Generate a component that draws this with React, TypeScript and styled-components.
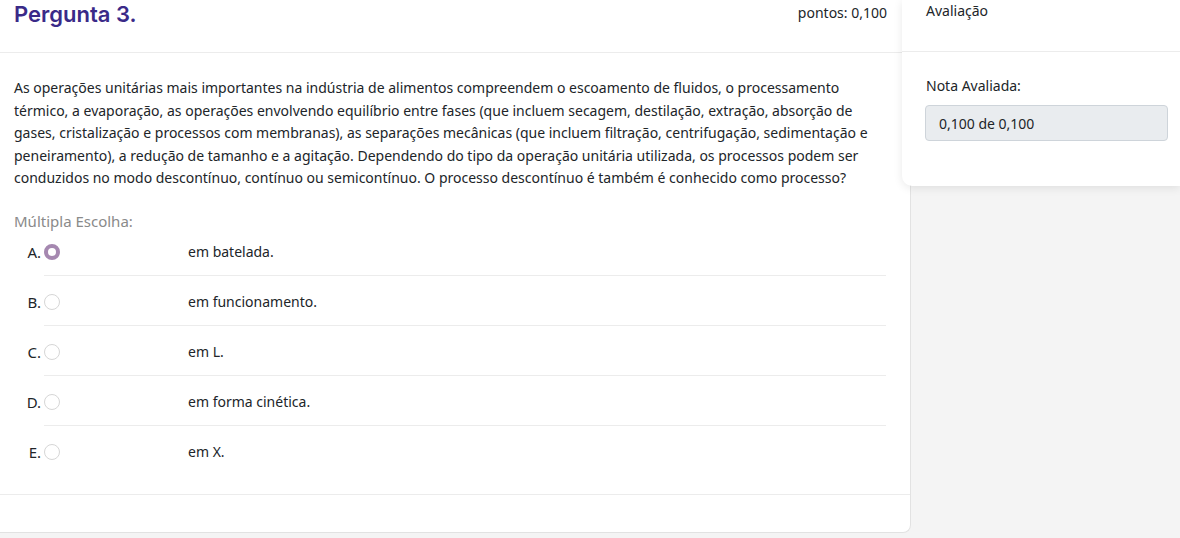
import styled, { createGlobalStyle } from 'styled-components';

const GlobalStyle = createGlobalStyle`
  html, body {
    margin: 0;
    padding: 0;
    background: #f4f4f4;
    font-family: "Segoe UI", "Noto Sans", "Liberation Sans", sans-serif;
    color: #212529;
  }
`

const Page = styled.div`
  display: flex;
  align-items: flex-start;
  height: 538px;
  overflow: hidden;
`

const QuestionCard = styled.section`
  width: 911px;
  flex-shrink: 0;
  background: #fff;
  border-right: 1px solid #e2e2e2;
  border-bottom: 1px solid #e2e2e2;
  border-bottom-right-radius: 8px;
  box-sizing: border-box;
`

const CardHeader = styled.header`
  height: 52px;
  display: flex;
  justify-content: space-between;
  align-items: flex-start;
  padding: 0 23px 0 14px;
  border-bottom: 1px solid #ececec;
`

const Title = styled.h2`
  margin: -1px 0 0;
  font-family: Inter, "Liberation Sans", sans-serif;
  font-size: 22px;
  font-weight: 600;
  line-height: 30px;
  color: #3a2a88;
`

const Points = styled.span`
  font-size: 14px;
  line-height: 26px;
`

const CardBody = styled.div`
  padding: 24px 24px 0 14px;
`

const Statement = styled.p`
  margin: 0;
  font-size: 14px;
  line-height: 22.6px;
`

const ChoiceLabel = styled.div`
  margin-top: 23px;
  color: #8a8a8a;
  font-size: 15px;
  line-height: 16px;
`

const OptionList = styled.ul`
  list-style: none;
  margin: 0;
  padding: 0 24px 0 44px;
`

const OptionRow = styled.li<{ $last?: boolean }>`
  display: flex;
  align-items: center;
  padding: ${p => (p.$last ? '15px 0 31px' : '15px 0 12px')};
  line-height: 22px;
  font-size: 14px;
  border-bottom: ${p => (p.$last ? 'none' : '1px solid #ececec')};

  &:first-child {
    padding-top: 12px;
  }
`

const Letter = styled.span`
  width: 15px;
  margin-left: -18px;
  margin-right: 3px;
  font-size: 15px;
  text-align: right;
  white-space: nowrap;
`

const Radio = styled.span<{ $checked?: boolean }>`
  width: 16px;
  height: 16px;
  border-radius: 50%;
  box-sizing: border-box;
  flex-shrink: 0;
  border: ${p => (p.$checked ? '4.5px solid #a588b0' : '1px solid #d6d6d6')};
  background: #fff;
`

const AnswerText = styled.span`
  margin-left: 128px;
`

const CardFooter = styled.div`
  height: 37px;
  border-top: 1px solid #ececec;
`

const SidePanel = styled.aside`
  position: relative;
  z-index: 2;
  flex: 1;
  margin-left: -9px;
  background: #fff;
  border-bottom-left-radius: 10px;
  box-shadow: 0 2px 10px rgba(0, 0, 0, 0.09);
`

const PanelHeader = styled.div`
  height: 51px;
  padding: 0 24px;
  border-bottom: 1px solid #ececec;
  font-size: 14px;
  line-height: 22px;
`

const PanelBody = styled.div`
  padding: 23px 12px 45px 23px;
`

const FieldLabel = styled.div`
  font-size: 14px;
  line-height: 22px;
  margin-left: 1px;
  margin-bottom: 8px;
`

const ReadonlyField = styled.div`
  height: 36px;
  box-sizing: border-box;
  padding: 0 13px;
  display: flex;
  align-items: center;
  font-size: 14px;
  background: #e9ecef;
  border: 1px solid #ced4da;
  border-radius: 4px;
`

const options = [
  { letter: 'A.', text: 'em batelada.', checked: true },
  { letter: 'B.', text: 'em funcionamento.' },
  { letter: 'C.', text: 'em L.' },
  { letter: 'D.', text: 'em forma cinética.' },
  { letter: 'E.', text: 'em X.' },
]

export default function App() {
  return (
    <>
      <GlobalStyle />
      <Page>
        <QuestionCard>
          <CardHeader>
            <Title>Pergunta 3.</Title>
            <Points>pontos: 0,100</Points>
          </CardHeader>
          <CardBody>
            <Statement>
              As operações unitárias mais importantes na indústria de alimentos compreendem o escoamento de fluidos, o processamento térmico, a evaporação, as operações envolvendo equilíbrio entre fases (que incluem secagem, destilação, extração, absorção de gases, cristalização e processos com membranas), as separações mecânicas (que incluem filtração, centrifugação, sedimentação e peneiramento), a redução de tamanho e a agitação. Dependendo do tipo da operação unitária utilizada, os processos podem ser conduzidos no modo descontínuo, contínuo ou semicontínuo. O processo descontínuo é também é conhecido como processo?
            </Statement>
            <ChoiceLabel>Múltipla Escolha:</ChoiceLabel>
          </CardBody>
          <OptionList>
            {options.map((o, i) => (
              <OptionRow key={o.letter} $last={i === options.length - 1}>
                <Letter>{o.letter}</Letter>
                <Radio $checked={o.checked} />
                <AnswerText>{o.text}</AnswerText>
              </OptionRow>
            ))}
          </OptionList>
          <CardFooter />
        </QuestionCard>
        <SidePanel>
          <PanelHeader>Avaliação</PanelHeader>
          <PanelBody>
            <FieldLabel>Nota Avaliada:</FieldLabel>
            <ReadonlyField>0,100 de 0,100</ReadonlyField>
          </PanelBody>
        </SidePanel>
      </Page>
    </>
  )
}
